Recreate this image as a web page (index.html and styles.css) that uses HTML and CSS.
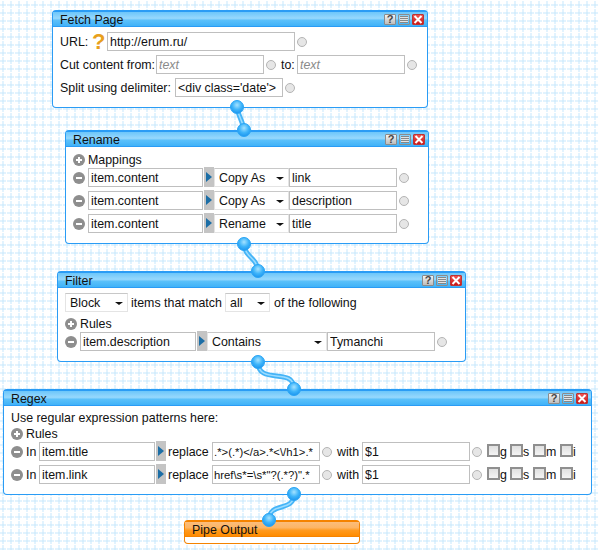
FILE: index.html
```html
<!DOCTYPE html>
<html lang="en">
<head>
    <meta charset="UTF-8">
    <meta name="viewport" content="width=device-width, initial-scale=1.0">
    <title>Pipe Editor</title>
    <link rel="stylesheet" href="styles.css">
</head>
<body>
    <div class="canvas">

        <div class="module fetch">
            <div class="module-head">
                <span class="module-title">Fetch Page</span>
                <span class="win-btn help">?</span>
                <span class="win-btn minimize"></span>
                <span class="win-btn close"><svg width="10" height="9" viewBox="0 0 10 9"><path d="M1.5 1l7 7M8.5 1l-7 7" stroke="#fff" stroke-width="2"/></svg></span>
            </div>
            <div class="module-body">
                <div class="row">
                    <span class="lbl-url">URL:</span>
                    <span class="hint">?</span>
                    <input class="field w188" type="text" value="http://erum.ru/">
                    <span class="port"></span>
                </div>
                <div class="row">
                    <span class="lbl-cut">Cut content from:</span>
                    <input class="field w108" type="text" placeholder="text">
                    <span class="port"></span>
                    <span class="lbl-to">to:</span>
                    <input class="field w108" type="text" placeholder="text">
                    <span class="port"></span>
                </div>
                <div class="row">
                    <span class="lbl-split">Split using delimiter:</span>
                    <input class="field w108" type="text" value="&lt;div class='date'&gt;">
                    <span class="port"></span>
                </div>
            </div>
        </div>

        <div class="module rename">
            <div class="module-head">
                <span class="module-title">Rename</span>
                <span class="win-btn help">?</span>
                <span class="win-btn minimize"></span>
                <span class="win-btn close"><svg width="10" height="9" viewBox="0 0 10 9"><path d="M1.5 1l7 7M8.5 1l-7 7" stroke="#fff" stroke-width="2"/></svg></span>
            </div>
            <div class="module-body">
                <div class="sub-row"><span class="round-btn plus"></span><span>Mappings</span></div>
                <div class="row">
                    <span class="round-btn minus"></span>
                    <input class="field w115" type="text" value="item.content">
                    <span class="drop-arrow"></span>
                    <span class="sel w75">Copy As</span>
                    <input class="field w108" type="text" value="link">
                    <span class="port"></span>
                </div>
                <div class="row">
                    <span class="round-btn minus"></span>
                    <input class="field w115" type="text" value="item.content">
                    <span class="drop-arrow"></span>
                    <span class="sel w75">Copy As</span>
                    <input class="field w108" type="text" value="description">
                    <span class="port"></span>
                </div>
                <div class="row">
                    <span class="round-btn minus"></span>
                    <input class="field w115" type="text" value="item.content">
                    <span class="drop-arrow"></span>
                    <span class="sel w75">Rename</span>
                    <input class="field w108" type="text" value="title">
                    <span class="port"></span>
                </div>
            </div>
        </div>

        <div class="module filter">
            <div class="module-head">
                <span class="module-title">Filter</span>
                <span class="win-btn help">?</span>
                <span class="win-btn minimize"></span>
                <span class="win-btn close"><svg width="10" height="9" viewBox="0 0 10 9"><path d="M1.5 1l7 7M8.5 1l-7 7" stroke="#fff" stroke-width="2"/></svg></span>
            </div>
            <div class="module-body">
                <div class="row">
                    <span class="sel w63">Block</span>
                    <span class="lbl-match">items that match</span>
                    <span class="sel w45">all</span>
                    <span class="lbl-of">of the following</span>
                </div>
                <div class="sub-row"><span class="round-btn plus"></span><span>Rules</span></div>
                <div class="row">
                    <span class="round-btn minus"></span>
                    <input class="field w116" type="text" value="item.description">
                    <span class="drop-arrow"></span>
                    <span class="sel w120">Contains</span>
                    <input class="field w108" type="text" value="Tymanchi">
                    <span class="port"></span>
                </div>
            </div>
        </div>

        <div class="module regex">
            <div class="module-head">
                <span class="module-title">Regex</span>
                <span class="win-btn help">?</span>
                <span class="win-btn minimize"></span>
                <span class="win-btn close"><svg width="10" height="9" viewBox="0 0 10 9"><path d="M1.5 1l7 7M8.5 1l-7 7" stroke="#fff" stroke-width="2"/></svg></span>
            </div>
            <div class="module-body">
                <div class="text-row">Use regular expression patterns here:</div>
                <div class="sub-row"><span class="round-btn plus"></span><span>Rules</span></div>
                <div class="row">
                    <span class="round-btn minus"></span>
                    <span class="lbl-in">In</span>
                    <input class="field w116" type="text" value="item.title">
                    <span class="drop-arrow"></span>
                    <span class="lbl-replace">replace</span>
                    <input class="field w108 tight" type="text" value=".*&gt;(.*)&lt;/a&gt;.*&lt;\/h1&gt;.*">
                    <span class="port"></span>
                    <span class="lbl-with">with</span>
                    <input class="field w108" type="text" value="$1">
                    <span class="port"></span>
                    <span class="check first"></span><span class="flag">g</span>
                    <span class="check"></span><span class="flag">s</span>
                    <span class="check"></span><span class="flag wide">m</span>
                    <span class="check"></span><span class="flag">i</span>
                </div>
                <div class="row">
                    <span class="round-btn minus"></span>
                    <span class="lbl-in">In</span>
                    <input class="field w116" type="text" value="item.link">
                    <span class="drop-arrow"></span>
                    <span class="lbl-replace">replace</span>
                    <input class="field w108 tight" type="text" value="href\s*=\s*&quot;?(.*?)&quot;.*">
                    <span class="port"></span>
                    <span class="lbl-with">with</span>
                    <input class="field w108" type="text" value="$1">
                    <span class="port"></span>
                    <span class="check first"></span><span class="flag">g</span>
                    <span class="check"></span><span class="flag">s</span>
                    <span class="check"></span><span class="flag wide">m</span>
                    <span class="check"></span><span class="flag">i</span>
                </div>
            </div>
        </div>

        <div class="module output">
            <div class="module-head">
                <span class="module-title">Pipe Output</span>
            </div>
        </div>

        <!-- wires and terminals sit over the modules -->
        <svg class="wires" width="599" height="550" viewBox="0 0 599 550">
            <defs>
                <radialGradient id="ball" cx="0.5" cy="0.35" r="0.65">
                    <stop offset="0" stop-color="#a5e2ff"/>
                    <stop offset="0.55" stop-color="#3db4fa"/>
                    <stop offset="1" stop-color="#1d95ee"/>
                </radialGradient>
            </defs>
            <g fill="none" stroke="#45b4f7" stroke-width="5">
                <path d="M237 107C238 116 243 121 244 130"/>
                <path d="M244 244C245 258 257 257 258 271"/>
                <path d="M258 362C258 386 294 366 294 389"/>
                <path d="M294 494C294 513 269 501 269 520"/>
            </g>
            <g fill="none" stroke="#9bdcff" stroke-width="1.5">
                <path d="M237 107C238 116 243 121 244 130"/>
                <path d="M244 244C245 258 257 257 258 271"/>
                <path d="M258 362C258 386 294 366 294 389"/>
                <path d="M294 494C294 513 269 501 269 520"/>
            </g>
            <g fill="url(#ball)" stroke="#2aa5f5">
                <circle cx="237" cy="107" r="6.5"/>
                <circle cx="244" cy="130" r="6.5"/>
                <circle cx="244" cy="244" r="6.5"/>
                <circle cx="258" cy="271" r="6.5"/>
                <circle cx="258" cy="362" r="6.5"/>
                <circle cx="294" cy="389" r="6.5"/>
                <circle cx="294" cy="494" r="6.5"/>
                <circle cx="269" cy="520" r="6.5"/>
            </g>
        </svg>
    </div>
</body>
</html>
```

FILE: styles.css
```css
* {
    box-sizing: border-box;
}

body {
    margin: 0;
    height: 550px;
    overflow: hidden;
    font-family: "Liberation Sans", Arial, sans-serif;
    font-size: 12.4px;
    color: #111;
}

.canvas {
    position: relative;
    width: 599px;
    height: 550px;
    overflow: hidden;
    background-color: #fff;
    background-image: url("data:image/svg+xml,%3Csvg xmlns='http://www.w3.org/2000/svg' width='8' height='8'%3E%3Cpath fill='%23e2f3fe' d='M2 1h2v7H2zM0 4h6v2H0zM7 4h1v2H7z'/%3E%3Cpath fill='%23d4edfc' d='M2 4h2v2H2z'/%3E%3C/svg%3E");
    background-size: 8px 8px;
}

.module {
    position: absolute;
    background: #fff;
    border: 1px solid #2a9cf5;
    border-top-width: 2px;
    border-radius: 4px;
}

.fetch { left: 52px; top: 10px; width: 376px; height: 98px; }
.rename { left: 65px; top: 130px; width: 364px; height: 114px; }
.filter { left: 57px; top: 271px; width: 409px; height: 91px; }
.regex { left: 3px; top: 389px; width: 589px; height: 106px; }
.output { left: 184px; top: 520px; width: 176px; height: 24px; border-color: #f58300; }

.module-head {
    display: flex;
    align-items: center;
    gap: 2px;
    height: 15px;
    padding: 0 3px 0 7px;
    background: linear-gradient(#6cc6fa, #96d8fd 45%, #5ac0fa 60%, #40b2f8);
    border-bottom: 1px solid #2a9cf5;
}

.output .module-head {
    background: linear-gradient(#fbbd7c, #fdb565 40%, #ff9a1e 60%, #ff8c00);
    border-bottom-color: #f58300;
}

.module-title {
    flex: 1;
    padding-top: 2px;
}

.win-btn {
    display: flex;
    align-items: center;
    justify-content: center;
    width: 12px;
    height: 11px;
    border: 1px solid #8c8c8c;
    border-radius: 1px;
    background: linear-gradient(#f2f2f2, #bdbdbd);
    font-size: 11px;
    font-weight: bold;
    color: #444;
}

.minimize {
    background: repeating-linear-gradient(#e4e4e4 0, #e4e4e4 1px, #888 1px, #888 2px);
    background-clip: content-box;
    padding: 1px 1px;
}

.close {
    background: linear-gradient(#f0524f, #c91818);
    border-color: #b33;
}

.module-body {
    padding: 5px 7px 0;
}

.row {
    display: flex;
    align-items: center;
    height: 19px;
    margin-bottom: 4px;
    white-space: nowrap;
}

.sub-row {
    display: flex;
    align-items: center;
    height: 15px;
    margin-bottom: 1px;
}

.text-row {
    height: 15px;
    line-height: 15px;
}

.field {
    height: 19px;
    padding: 0 2px;
    margin: 0;
    border: 1px solid #bfbfbf;
    background: #fff;
    font: 12.4px "Liberation Sans", Arial, sans-serif;
    color: #111;
    outline: none;
    flex-shrink: 0;
}

.field::placeholder {
    font-style: italic;
    color: #8a8a8a;
    opacity: 1;
}

.tight {
    padding: 0 1px;
    font-size: 11.3px;
}

.w108 { width: 108px; }
.w115 { width: 115px; }
.w116 { width: 116px; }
.w188 { width: 188px; }
.w45 { width: 45px; }
.w63 { width: 63px; }
.w75 { width: 75px; }
.w120 { width: 120px; }

.lbl-url { width: 28px; flex-shrink: 0; }
.lbl-cut { width: 96px; flex-shrink: 0; }
.lbl-to { width: 16px; margin-left: 5px; flex-shrink: 0; }
.lbl-split { width: 115px; flex-shrink: 0; }
.lbl-match { width: 94px; margin-left: 3px; flex-shrink: 0; }
.lbl-of { margin-left: 4px; }
.lbl-in { width: 13px; flex-shrink: 0; }
.lbl-replace { width: 44px; margin-left: 2px; flex-shrink: 0; }
.lbl-with { width: 25px; margin-left: 5px; flex-shrink: 0; }

.hint {
    width: 13px;
    margin: 0 2px 0 4px;
    text-align: center;
    font-size: 22px;
    font-weight: bold;
    line-height: 19px;
    color: #e8a01c;
    flex-shrink: 0;
}

.port {
    width: 10px;
    height: 10px;
    margin-left: 2px;
    border: 1px solid #b4b4b4;
    border-radius: 50%;
    background: #e6e6e6;
    flex-shrink: 0;
}

.round-btn {
    position: relative;
    width: 12px;
    height: 12px;
    margin-right: 3px;
    border-radius: 50%;
    background: #8e8e8e;
    flex-shrink: 0;
}

.round-btn::before {
    content: "";
    position: absolute;
    left: 3px;
    top: 5px;
    width: 6px;
    height: 2px;
    background: #fff;
}

.plus::after {
    content: "";
    position: absolute;
    left: 5px;
    top: 3px;
    width: 2px;
    height: 6px;
    background: #fff;
}

.drop-arrow {
    position: relative;
    width: 10px;
    height: 20px;
    margin: -1px 0 0 1px;
    background: #c4c4c4;
    flex-shrink: 0;
}

.drop-arrow::after {
    content: "";
    position: absolute;
    left: 2px;
    top: 5px;
    border-left: 6px solid #1c6ea6;
    border-top: 5px solid transparent;
    border-bottom: 5px solid transparent;
}

.sel {
    position: relative;
    height: 19px;
    line-height: 18px;
    padding-left: 4px;
    border: 1px solid #e4e4e4;
    border-top-color: #c8c8c8;
    background: #fff;
    flex-shrink: 0;
}

.sel::after {
    content: "";
    position: absolute;
    right: 4px;
    top: 8px;
    border-top: 3px solid #111;
    border-left: 4px solid transparent;
    border-right: 4px solid transparent;
}

.check {
    width: 13px;
    height: 13px;
    margin-top: -3px;
    border: 2px solid #8f8f8f;
    background: linear-gradient(#e0e0e0, #f4f4f4);
    flex-shrink: 0;
}

.check.first {
    margin-left: 5px;
}

.flag {
    width: 10px;
    flex-shrink: 0;
}

.flag.wide {
    width: 14px;
}

.wires {
    position: absolute;
    left: 0;
    top: 0;
    pointer-events: none;
}
```
